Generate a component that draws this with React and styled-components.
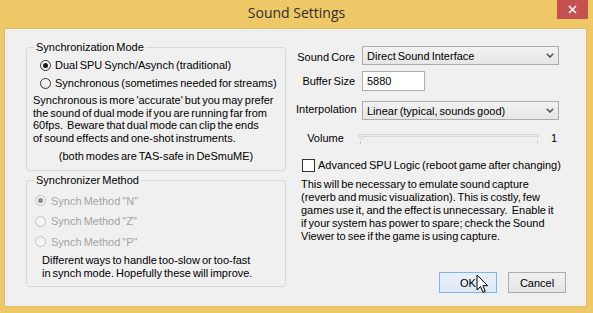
import React from 'react';
import styled, { createGlobalStyle } from 'styled-components';

const Global = createGlobalStyle`
  html, body { margin: 0; padding: 0; background: #efc867; }
  body { width: 593px; height: 313px; overflow: hidden; }
  *, *::before, *::after { box-sizing: border-box; }
`;

const Window = styled.div`
  position: relative;
  width: 593px;
  height: 313px;
  background: #efc867;
  display: flex;
  flex-direction: column;
  font-family: "Liberation Sans", Arial, sans-serif;
  font-size: 11px;
  word-spacing: -1px;
  color: #000;
`;

const TitleBar = styled.div`
  height: 29px;
  display: flex;
  align-items: flex-start;
  flex: none;
`;

const Title = styled.div`
  flex: 1;
  text-align: center;
  padding-left: 36px;
  font-family: "Open Sans", "Noto Sans", sans-serif;
  font-size: 14px;
  word-spacing: 0;
  line-height: 26px;
  color: #2e2e2e;
`;

const CloseButton = styled.div`
  width: 31px;
  height: 19px;
  margin-right: 5px;
  background: #c75050;
  display: flex;
  align-items: center;
  justify-content: center;
`;

const Client = styled.div`
  flex: 1;
  margin: 0 7px 7px 5px;
  background: #f0f0f0;
  box-shadow: 0 0 0 1px #e3bb62;
  display: grid;
  grid-template-columns: 260px 270px;
  column-gap: 10px;
  padding: 12px 0 0 21px;
`;

const LeftCol = styled.div`
  display: flex;
  flex-direction: column;
`;

const GroupBox = styled.fieldset`
  margin: ${p => p.$mt || 0}px 0 0;
  border: 1px solid #d9d9d9;
  border-radius: 3px;
  padding: 0 6px ${p => p.$pb}px 6px;
  min-width: 0;
`;

const Legend = styled.legend`
  padding: 0 2px;
  margin-left: 1px;
  line-height: 13px;
`;

const RadioRow = styled.div`
  display: flex;
  align-items: center;
  gap: ${p => p.$gap}px;
  height: ${p => p.$h}px;
  margin-top: ${p => p.$mt || 0}px;
  padding-left: ${p => p.$indent}px;
  white-space: nowrap;
  color: ${p => (p.$disabled ? '#a3a3a3' : '#000')};
`;

const RadioCircle = styled.span`
  flex: none;
  width: 11px;
  height: 11px;
  border-radius: 50%;
  border: 1px solid ${p => (p.$disabled ? '#c2c2c2' : '#333')};
  background: ${p => (p.$disabled ? '#f4f4f4' : 'linear-gradient(#f8f8f8, #e9e9e9)')};
  display: flex;
  align-items: center;
  justify-content: center;
  &::after {
    content: '';
    display: ${p => (p.$checked ? 'block' : 'none')};
    width: 5px;
    height: 5px;
    border-radius: 50%;
    background: ${p => (p.$disabled ? '#8c8c8c' : '#1a1a1a')};
  }
`;

const Text = styled.p`
  margin: ${p => p.$mt || 0}px 0 0;
  padding-left: ${p => p.$pl || 0}px;
  line-height: ${p => p.$lh}px;
  white-space: nowrap;
  text-align: ${p => p.$align || 'left'};
`;

const RightCol = styled.div`
  display: flex;
  flex-direction: column;
  padding-top: 5px;
`;

const FieldRow = styled.div`
  display: grid;
  grid-template-columns: 59px auto;
  column-gap: 7px;
  align-items: center;
  margin-top: ${p => p.$mt || 0}px;
`;

const FieldLabel = styled.span`
  text-align: right;
  white-space: nowrap;
  position: relative;
  top: ${p => p.$dy || 0}px;
`;

const Combo = styled.div`
  width: 197px;
  height: 19px;
  border: 1px solid #acacac;
  background: linear-gradient(#f2f2f2, #e6e6e6);
  display: flex;
  align-items: center;
  justify-content: space-between;
  padding: 0 4px 0 4px;
  white-space: nowrap;
`;

const TextInput = styled.div`
  width: 63px;
  height: 20px;
  border: 1px solid #abadb3;
  background: #fff;
  display: flex;
  align-items: center;
  padding-left: 4px;
`;

const VolumeRow = styled.div`
  display: grid;
  grid-template-columns: 59px 181px 1fr;
  column-gap: 3px;
  align-items: center;
  height: 20px;
  margin-top: 8px;
`;

const VolumeLabel = styled.span`
  text-align: center;
`;

const VolumeValue = styled.span`
  text-align: right;
  padding-right: 9px;
`;

const CheckRow = styled.label`
  display: flex;
  align-items: center;
  gap: 3px;
  height: 14px;
  margin-top: 10px;
  padding-left: 6px;
  white-space: nowrap;
`;

const CheckBox = styled.span`
  flex: none;
  width: 13px;
  height: 13px;
  border: 1px solid #333;
  background: #fff;
`;

const ButtonRow = styled.div`
  margin-top: auto;
  margin-bottom: 13px;
  display: flex;
  justify-content: flex-end;
  gap: 11px;
`;

const Button = styled.div`
  width: 58px;
  height: 21px;
  display: flex;
  align-items: center;
  justify-content: center;
  border: 1px solid ${p => (p.$hover ? '#7eb4ea' : '#acacac')};
  background: ${p => (p.$hover ? 'linear-gradient(#e8f1fa, #dde9f5)' : 'linear-gradient(#f0f0f0, #e5e5e5)')};
`;

const Cursor = styled.svg`
  position: absolute;
  left: 476px;
  top: 274px;
`;

const Chevron = () => (
  <svg width="8" height="5" viewBox="0 0 8 5">
    <path d="M0.8 0.8 L4 4 L7.2 0.8" fill="none" stroke="#555" strokeWidth="1.6" />
  </svg>
);

const Slider = () => (
  <svg width="181" height="20" viewBox="0 0 181 20">
    <rect x="0.5" y="6.5" width="180" height="2" fill="#e9e9e9" stroke="#d8d8d8" />
    <path d="M2 9.5 L4 11.5 L6 9.5" fill="none" stroke="#d0d0d0" strokeWidth="1" />
    <rect x="2" y="13" width="1" height="3" fill="#c8c8c8" />
    <rect x="179" y="13" width="1" height="3" fill="#c8c8c8" />
  </svg>
);

export default function App() {
  return (
    <>
      <Global />
      <Window>
        <TitleBar>
          <Title>Sound Settings</Title>
          <CloseButton>
            <svg width="9" height="9" viewBox="0 0 9 9">
              <path d="M1 1 L8 8 M8 1 L1 8" stroke="#fff" strokeWidth="1.6" />
            </svg>
          </CloseButton>
        </TitleBar>
        <Client>
          <LeftCol>
            <GroupBox $pb={7}>
              <Legend>Synchronization Mode</Legend>
              <RadioRow $h={18} $mt={2} $indent={7} $gap={4}>
                <RadioCircle $checked />
                Dual SPU Synch/Asynch (traditional)
              </RadioRow>
              <RadioRow $h={18} $indent={7} $gap={4}>
                <RadioCircle />
                Synchronous (sometimes needed for streams)
              </RadioRow>
              <Text $mt={2} $lh={12.5}>
                Synchronous is more 'accurate' but you may prefer<br />
                the sound of dual mode if you are running far from<br />
                60fps.&nbsp; Beware that dual mode can clip the ends<br />
                of sound effects and one-shot instruments.
              </Text>
              <Text $mt={6} $lh={12.5} $align="center">
                (both modes are TAS-safe in DeSmuME)
              </Text>
            </GroupBox>
            <GroupBox $mt={3.5} $pb={7}>
              <Legend>Synchronizer Method</Legend>
              <RadioRow $h={20.5} $mt={3.25} $indent={2} $gap={5} $disabled>
                <RadioCircle $checked $disabled />
                Synch Method "N"
              </RadioRow>
              <RadioRow $h={20.5} $indent={2} $gap={5} $disabled>
                <RadioCircle $disabled />
                Synch Method "Z"
              </RadioRow>
              <RadioRow $h={20.5} $indent={2} $gap={5} $disabled>
                <RadioCircle $disabled />
                Synch Method "P"
              </RadioRow>
              <Text $mt={2.5} $lh={12.5} $pl={9}>
                Different ways to handle too-slow or too-fast<br />
                in synch mode. Hopefully these will improve.
              </Text>
            </GroupBox>
          </LeftCol>
          <RightCol>
            <FieldRow>
              <FieldLabel $dy={1}>Sound Core</FieldLabel>
              <Combo>
                Direct Sound Interface
                <Chevron />
              </Combo>
            </FieldRow>
            <FieldRow $mt={6}>
              <FieldLabel>Buffer Size</FieldLabel>
              <TextInput>5880</TextInput>
            </FieldRow>
            <FieldRow $mt={10}>
              <FieldLabel $dy={-2}>Interpolation</FieldLabel>
              <Combo>
                Linear (typical, sounds good)
                <Chevron />
              </Combo>
            </FieldRow>
            <VolumeRow>
              <VolumeLabel>Volume</VolumeLabel>
              <Slider />
              <VolumeValue>1</VolumeValue>
            </VolumeRow>
            <CheckRow>
              <CheckBox />
              Advanced SPU Logic (reboot game after changing)
            </CheckRow>
            <Text $mt={5.5} $lh={13} $pl={5}>
              This will be necessary to emulate sound capture<br />
              (reverb and music visualization). This is costly, few<br />
              games use it, and the effect is unnecessary.&nbsp; Enable it<br />
              if your system has power to spare; check the Sound<br />
              Viewer to see if the game is using capture.
            </Text>
            <ButtonRow>
              <Button $hover>OK</Button>
              <Button>Cancel</Button>
            </ButtonRow>
          </RightCol>
        </Client>
        <Cursor width="13" height="20" viewBox="0 0 13 20">
          <path
            d="M1 1 L1 16 L4.5 12.6 L7 18.3 L9.3 17.3 L6.9 11.7 L11.6 11.7 Z"
            fill="#fff"
            stroke="#000"
            strokeWidth="1"
            strokeLinejoin="round"
          />
        </Cursor>
      </Window>
    </>
  );
}
